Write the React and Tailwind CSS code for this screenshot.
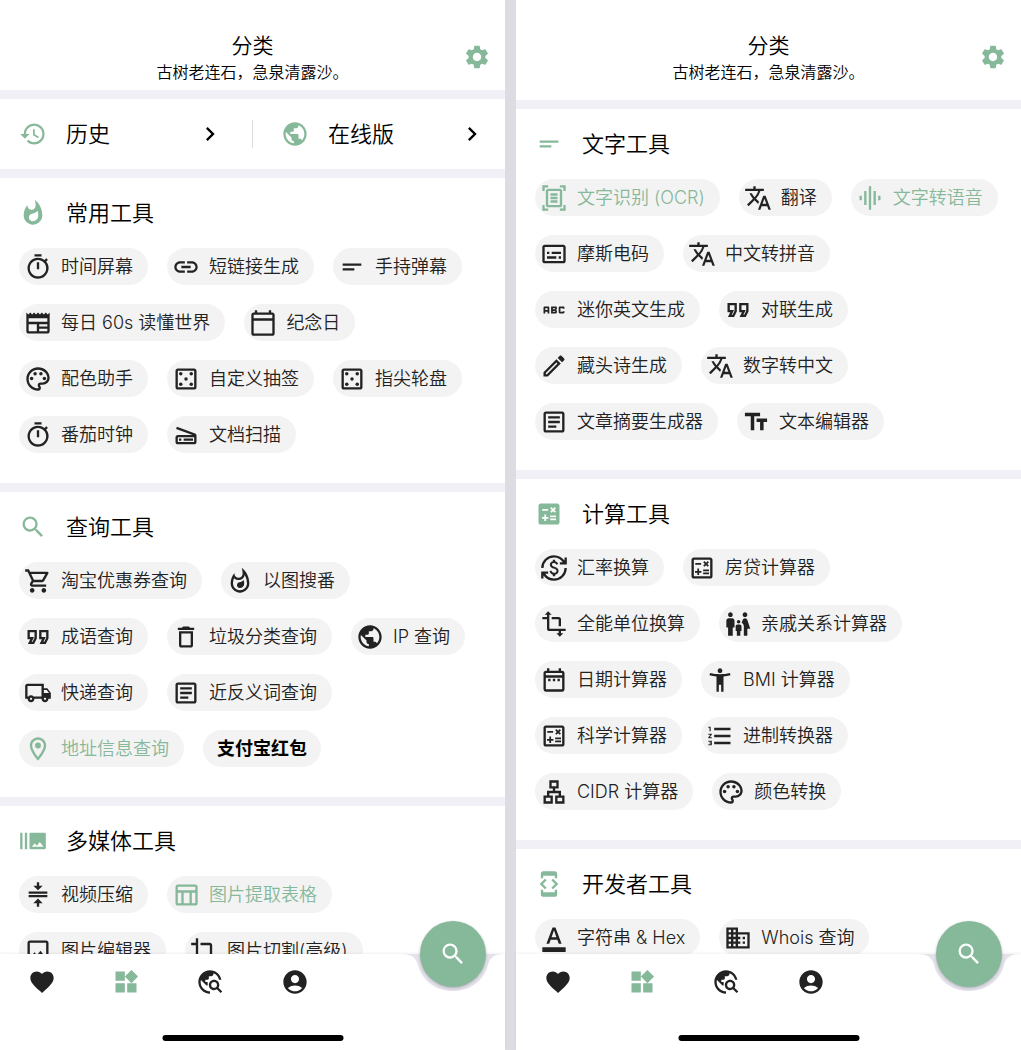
import {
	MdAbc,
	MdAccessibilityNew,
	MdAccountCircle,
	MdBurstMode,
	MdCalculate,
	MdChevronRight,
	MdCompress,
	MdCurrencyExchange,
	MdDeveloperMode,
	MdDomain,
	MdFamilyRestroom,
	MdFavorite,
	MdFormatColorText,
	MdFormatListNumbered,
	MdGraphicEq,
	MdHistory,
	MdLink,
	MdOutlineArticle,
	MdOutlineCalculate,
	MdOutlineCalendarToday,
	MdOutlineCasino,
	MdOutlineCreate,
	MdOutlineCrop,
	MdOutlineDateRange,
	MdOutlineDelete,
	MdOutlineDocumentScanner,
	MdOutlineFormatQuote,
	MdOutlineImage,
	MdOutlineLan,
	MdOutlineLocalShipping,
	MdOutlineLocationOn,
	MdOutlineNewspaper,
	MdOutlinePalette,
	MdOutlineScanner,
	MdOutlineShoppingCart,
	MdOutlineSubtitles,
	MdOutlineTableChart,
	MdOutlineTimer,
	MdOutlineWhatshot,
	MdPublic,
	MdSearch,
	MdSettings,
	MdShortText,
	MdTextFields,
	MdTransform,
	MdTranslate,
	MdTravelExplore,
	MdWhatshot,
	MdWidgets,
} from "react-icons/md";

const leftSections = [
	{
		title: "常用工具",
		icon: MdWhatshot,
		tools: [
			{ name: "时间屏幕", icon: MdOutlineTimer },
			{ name: "短链接生成", icon: MdLink },
			{ name: "手持弹幕", icon: MdShortText },
			{ name: "每日 60s 读懂世界", icon: MdOutlineNewspaper },
			{ name: "纪念日", icon: MdOutlineCalendarToday },
			{ name: "配色助手", icon: MdOutlinePalette },
			{ name: "自定义抽签", icon: MdOutlineCasino },
			{ name: "指尖轮盘", icon: MdOutlineCasino },
			{ name: "番茄时钟", icon: MdOutlineTimer },
			{ name: "文档扫描", icon: MdOutlineScanner },
		],
	},
	{
		title: "查询工具",
		icon: MdSearch,
		tools: [
			{ name: "淘宝优惠券查询", icon: MdOutlineShoppingCart },
			{ name: "以图搜番", icon: MdOutlineWhatshot },
			{ name: "成语查询", icon: MdOutlineFormatQuote },
			{ name: "垃圾分类查询", icon: MdOutlineDelete },
			{ name: "IP 查询", icon: MdPublic },
			{ name: "快递查询", icon: MdOutlineLocalShipping },
			{ name: "近反义词查询", icon: MdOutlineArticle },
			{ name: "地址信息查询", icon: MdOutlineLocationOn, active: true },
			{ name: "支付宝红包" },
		],
	},
	{
		title: "多媒体工具",
		icon: MdBurstMode,
		tools: [
			{ name: "视频压缩", icon: MdCompress },
			{ name: "图片提取表格", icon: MdOutlineTableChart, active: true },
			{ name: "图片编辑器", icon: MdOutlineImage },
			{ name: "图片切割(高级)", icon: MdOutlineCrop },
		],
	},
];

const rightSections = [
	{
		title: "文字工具",
		icon: MdShortText,
		tools: [
			{ name: "文字识别 (OCR)", icon: MdOutlineDocumentScanner, active: true },
			{ name: "翻译", icon: MdTranslate },
			{ name: "文字转语音", icon: MdGraphicEq, active: true },
			{ name: "摩斯电码", icon: MdOutlineSubtitles },
			{ name: "中文转拼音", icon: MdTranslate },
			{ name: "迷你英文生成", icon: MdAbc },
			{ name: "对联生成", icon: MdOutlineFormatQuote },
			{ name: "藏头诗生成", icon: MdOutlineCreate },
			{ name: "数字转中文", icon: MdTranslate },
			{ name: "文章摘要生成器", icon: MdOutlineArticle },
			{ name: "文本编辑器", icon: MdTextFields },
		],
	},
	{
		title: "计算工具",
		icon: MdCalculate,
		tools: [
			{ name: "汇率换算", icon: MdCurrencyExchange },
			{ name: "房贷计算器", icon: MdOutlineCalculate },
			{ name: "全能单位换算", icon: MdTransform },
			{ name: "亲戚关系计算器", icon: MdFamilyRestroom },
			{ name: "日期计算器", icon: MdOutlineDateRange },
			{ name: "BMI 计算器", icon: MdAccessibilityNew },
			{ name: "科学计算器", icon: MdOutlineCalculate },
			{ name: "进制转换器", icon: MdFormatListNumbered },
			{ name: "CIDR 计算器", icon: MdOutlineLan },
			{ name: "颜色转换", icon: MdOutlinePalette },
		],
	},
	{
		title: "开发者工具",
		icon: MdDeveloperMode,
		tools: [
			{ name: "字符串 & Hex", icon: MdFormatColorText },
			{ name: "Whois 查询", icon: MdDomain },
		],
	},
];

const navItems = [
	{ label: "收藏", icon: MdFavorite },
	{ label: "分类", icon: MdWidgets, active: true },
	{ label: "发现", icon: MdTravelExplore },
	{ label: "我的", icon: MdAccountCircle },
];

const Header = ({ className }) => (
	<header className={`relative bg-white text-center text-black shrink-0 pt-8 ${className}`}>
		<h1 className="text-[21px] leading-7">分类</h1>
		<p className="text-base leading-6">古树老连石，急泉清露沙。</p>
		<button type="button" aria-label="设置" className="absolute right-[14px] top-[43px] text-[#86b89a]">
			<MdSettings size={28} />
		</button>
	</header>
);

const Shortcut = ({ icon: Icon, label }) => (
	<a href="#" className="flex flex-1 items-center px-[19px] text-[22px] leading-8 text-black">
		<Icon size={28} className="text-[#86b89a]" />
		<span className="ml-[19px] flex-1">{label}</span>
		<MdChevronRight size={28} />
	</a>
);

const Shortcuts = () => (
	<div className="flex shrink-0 items-center bg-white py-[19px]">
		<Shortcut icon={MdHistory} label="历史" />
		<div className="mx-[9px] h-7 w-px bg-[#dcdcdc]" />
		<Shortcut icon={MdPublic} label="在线版" />
	</div>
);

const Chip = ({ name, icon: Icon, active }) => {
	if (!Icon) {
		return (
			<button type="button" className="h-[37px] rounded-full bg-[#f3f3f3] px-[14px] text-lg font-bold text-black">
				{name}
			</button>
		);
	}
	return (
		<button
			type="button"
			className={`flex h-[37px] items-center gap-[9px] whitespace-nowrap rounded-full bg-[#f3f3f3] pl-[5px] pr-[15px] text-lg ${
				active ? "text-[#86b89a]" : "text-[#222222]"
			}`}
		>
			<Icon size={28} />
			{name}
		</button>
	);
};

const Section = ({ title, icon: Icon, tools }) => (
	<section className="shrink-0 bg-white px-[19px] pt-[19px] pb-[30px]">
		<h2 className="flex items-center gap-[19px] text-[22px] leading-8 text-black">
			<Icon size={28} className="text-[#86b89a]" />
			{title}
		</h2>
		<div className="mt-[19px] flex flex-wrap gap-[19px]">
			{tools.map((tool) => (
				<Chip key={tool.name} {...tool} />
			))}
		</div>
	</section>
);

const BottomNav = () => (
	<div className="relative h-24 shrink-0">
		{/* bar background with the cut-out for the round button */}
		<div className="absolute inset-0 flex shadow-[0_-1px_3px_rgba(0,0,0,0.06)]">
			<div className="flex-1 bg-white" />
			<svg width="105" height="96" viewBox="0 0 105 96" className="bg-[#e4e3eb]">
				<path d="M0 0C11 0 16 3 18 11C22 27 36 37 53 37C70 37 84 27 88 11C90 3 95 0 105 0V96H0Z" fill="#fff" />
			</svg>
		</div>
		<nav className="relative grid grid-cols-6 pt-[14px]">
			{navItems.map(({ label, icon: Icon, active }) => (
				<a
					key={label}
					href="#"
					aria-label={label}
					className={`flex justify-center ${active ? "text-[#86b89a]" : "text-[#222222]"}`}
				>
					<Icon size={28} />
				</a>
			))}
		</nav>
		<button
			type="button"
			aria-label="搜索"
			className="absolute right-[19px] -top-[33px] flex size-[66px] items-center justify-center rounded-full bg-[#86b89a] text-white shadow-[0_1px_3px_rgba(0,0,0,0.25)]"
		>
			<MdSearch size={28} />
		</button>
		<div className="absolute bottom-[9px] left-1/2 h-[6px] w-[181px] -translate-x-1/2 rounded-full bg-black" />
	</div>
);

const Screen = ({ sections, headerClass, shortcuts }) => (
	<div className="flex h-full min-w-0 flex-1 flex-col bg-white">
		<Header className={headerClass} />
		<main className="flex min-h-0 flex-1 flex-col gap-[9px] overflow-y-auto bg-[#f1f0f7] pt-[9px] [scrollbar-width:none]">
			{shortcuts && <Shortcuts />}
			{sections.map((section) => (
				<Section key={section.title} {...section} />
			))}
		</main>
		<BottomNav />
	</div>
);

const App = () => {
	return (
		<div className="flex h-screen overflow-hidden font-['Inter','Noto_Sans_CJK_SC',sans-serif] font-[350]">
			<Screen sections={leftSections} headerClass="pb-[6px]" shortcuts />
			<div className="w-[11px] shrink-0 bg-[#dddce2]" />
			<Screen sections={rightSections} headerClass="pb-4" />
		</div>
	);
};

export default App;
